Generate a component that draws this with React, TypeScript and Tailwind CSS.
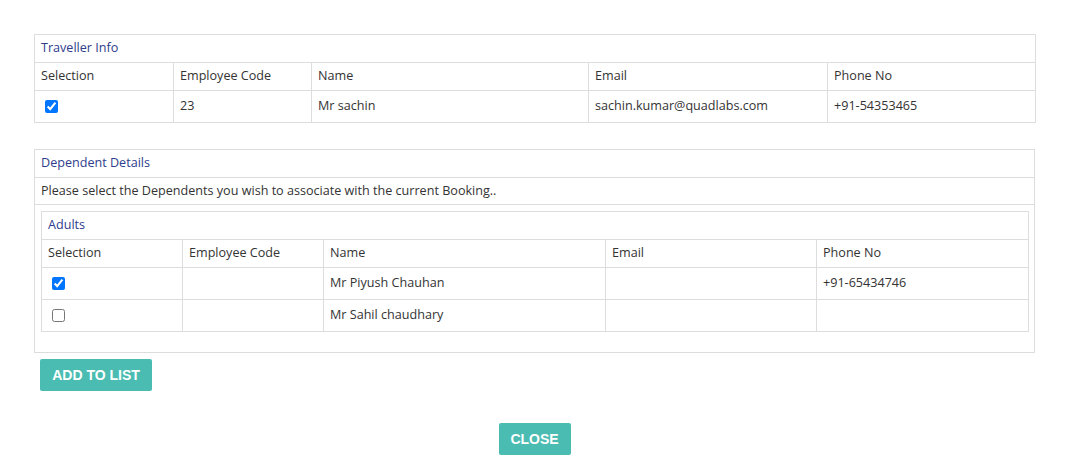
import React from "react";

const font = { fontFamily: '"Open Sans", "Liberation Sans", sans-serif' };

function Cell({ children }: { children?: React.ReactNode }) {
  return (
    <td className="border border-[#dddddd] px-[6px] text-[12.6px] text-[#333333] align-middle">
      {children}
    </td>
  );
}

function Cols({ widths }: { widths: number[] }) {
  return (
    <colgroup>
      {widths.map((w, i) => (
        <col key={i} style={{ width: w }} />
      ))}
    </colgroup>
  );
}

export default function App() {
  const outerW = [139, 138, 277, 239, 208];
  const innerW = [141, 141, 282, 211, 212];
  return (
    <div className="w-[1070px] h-[464px] bg-white pt-[34px] pl-[34px]" style={font}>
      <table className="w-[1001px] border-collapse table-fixed">
        <Cols widths={outerW} />
        <tbody>
          <tr className="h-[28px]">
            <td colSpan={5} className="border border-[#dddddd] px-[6px] text-[12.6px] text-[#2e3d8c]">Traveller Info</td>
          </tr>
          <tr className="h-[28px]">
            {["Selection", "Employee Code", "Name", "Email", "Phone No"].map((h) => (
              <Cell key={h}>{h}</Cell>
            ))}
          </tr>
          <tr className="h-[32px]">
            <Cell><input type="checkbox" defaultChecked className="align-middle ml-[4px]" /></Cell>
            <Cell>23</Cell>
            <Cell>Mr sachin</Cell>
            <Cell>sachin.kumar@quadlabs.com</Cell>
            <Cell>+91-54353465</Cell>
          </tr>
        </tbody>
      </table>

      <div className="mt-[26px] w-[1001px] border border-[#dddddd]">
        <div className="h-[28px] border-b border-[#dddddd] px-[6px] flex items-center text-[12.6px] text-[#2e3d8c]">Dependent Details</div>
        <div className="h-[27px] border-b border-[#dddddd] px-[6px] flex items-center text-[12.6px] text-[#333333]">
          Please select the Dependents you wish to associate with the current Booking..
        </div>
        <div className="px-[6px] pt-[6px] pb-[20px]">
          <table className="w-[987px] border-collapse table-fixed">
            <Cols widths={innerW} />
            <tbody>
              <tr className="h-[28px]">
                <td colSpan={5} className="border border-[#dddddd] px-[6px] text-[12.6px] text-[#2e3d8c]">Adults</td>
              </tr>
              <tr className="h-[28px]">
                {["Selection", "Employee Code", "Name", "Email", "Phone No"].map((h) => (
                  <Cell key={h}>{h}</Cell>
                ))}
              </tr>
              <tr className="h-[32px]">
                <Cell><input type="checkbox" defaultChecked className="align-middle ml-[4px]" /></Cell>
                <Cell />
                <Cell>Mr Piyush Chauhan</Cell>
                <Cell />
                <Cell>+91-65434746</Cell>
              </tr>
              <tr className="h-[32px]">
                <Cell><input type="checkbox" className="align-middle ml-[4px]" /></Cell>
                <Cell />
                <Cell>Mr Sahil chaudhary</Cell>
                <Cell />
                <Cell />
              </tr>
            </tbody>
          </table>
        </div>
      </div>

      <div className="mt-[6px] ml-[6px]">
        <button className="h-[32px] w-[112px] rounded-[2px] bg-[#4bbcb2] text-white font-bold text-[14px] uppercase" style={{ fontFamily: '"Liberation Sans", Arial, sans-serif' }}>
          ADD TO LIST
        </button>
      </div>

      <div className="w-[1001px] flex justify-center mt-[32px]">
        <button className="h-[32px] w-[72px] rounded-[2px] bg-[#4bbcb2] text-white font-bold text-[14px] uppercase" style={{ fontFamily: '"Liberation Sans", Arial, sans-serif' }}>
          CLOSE
        </button>
      </div>
    </div>
  );
}
